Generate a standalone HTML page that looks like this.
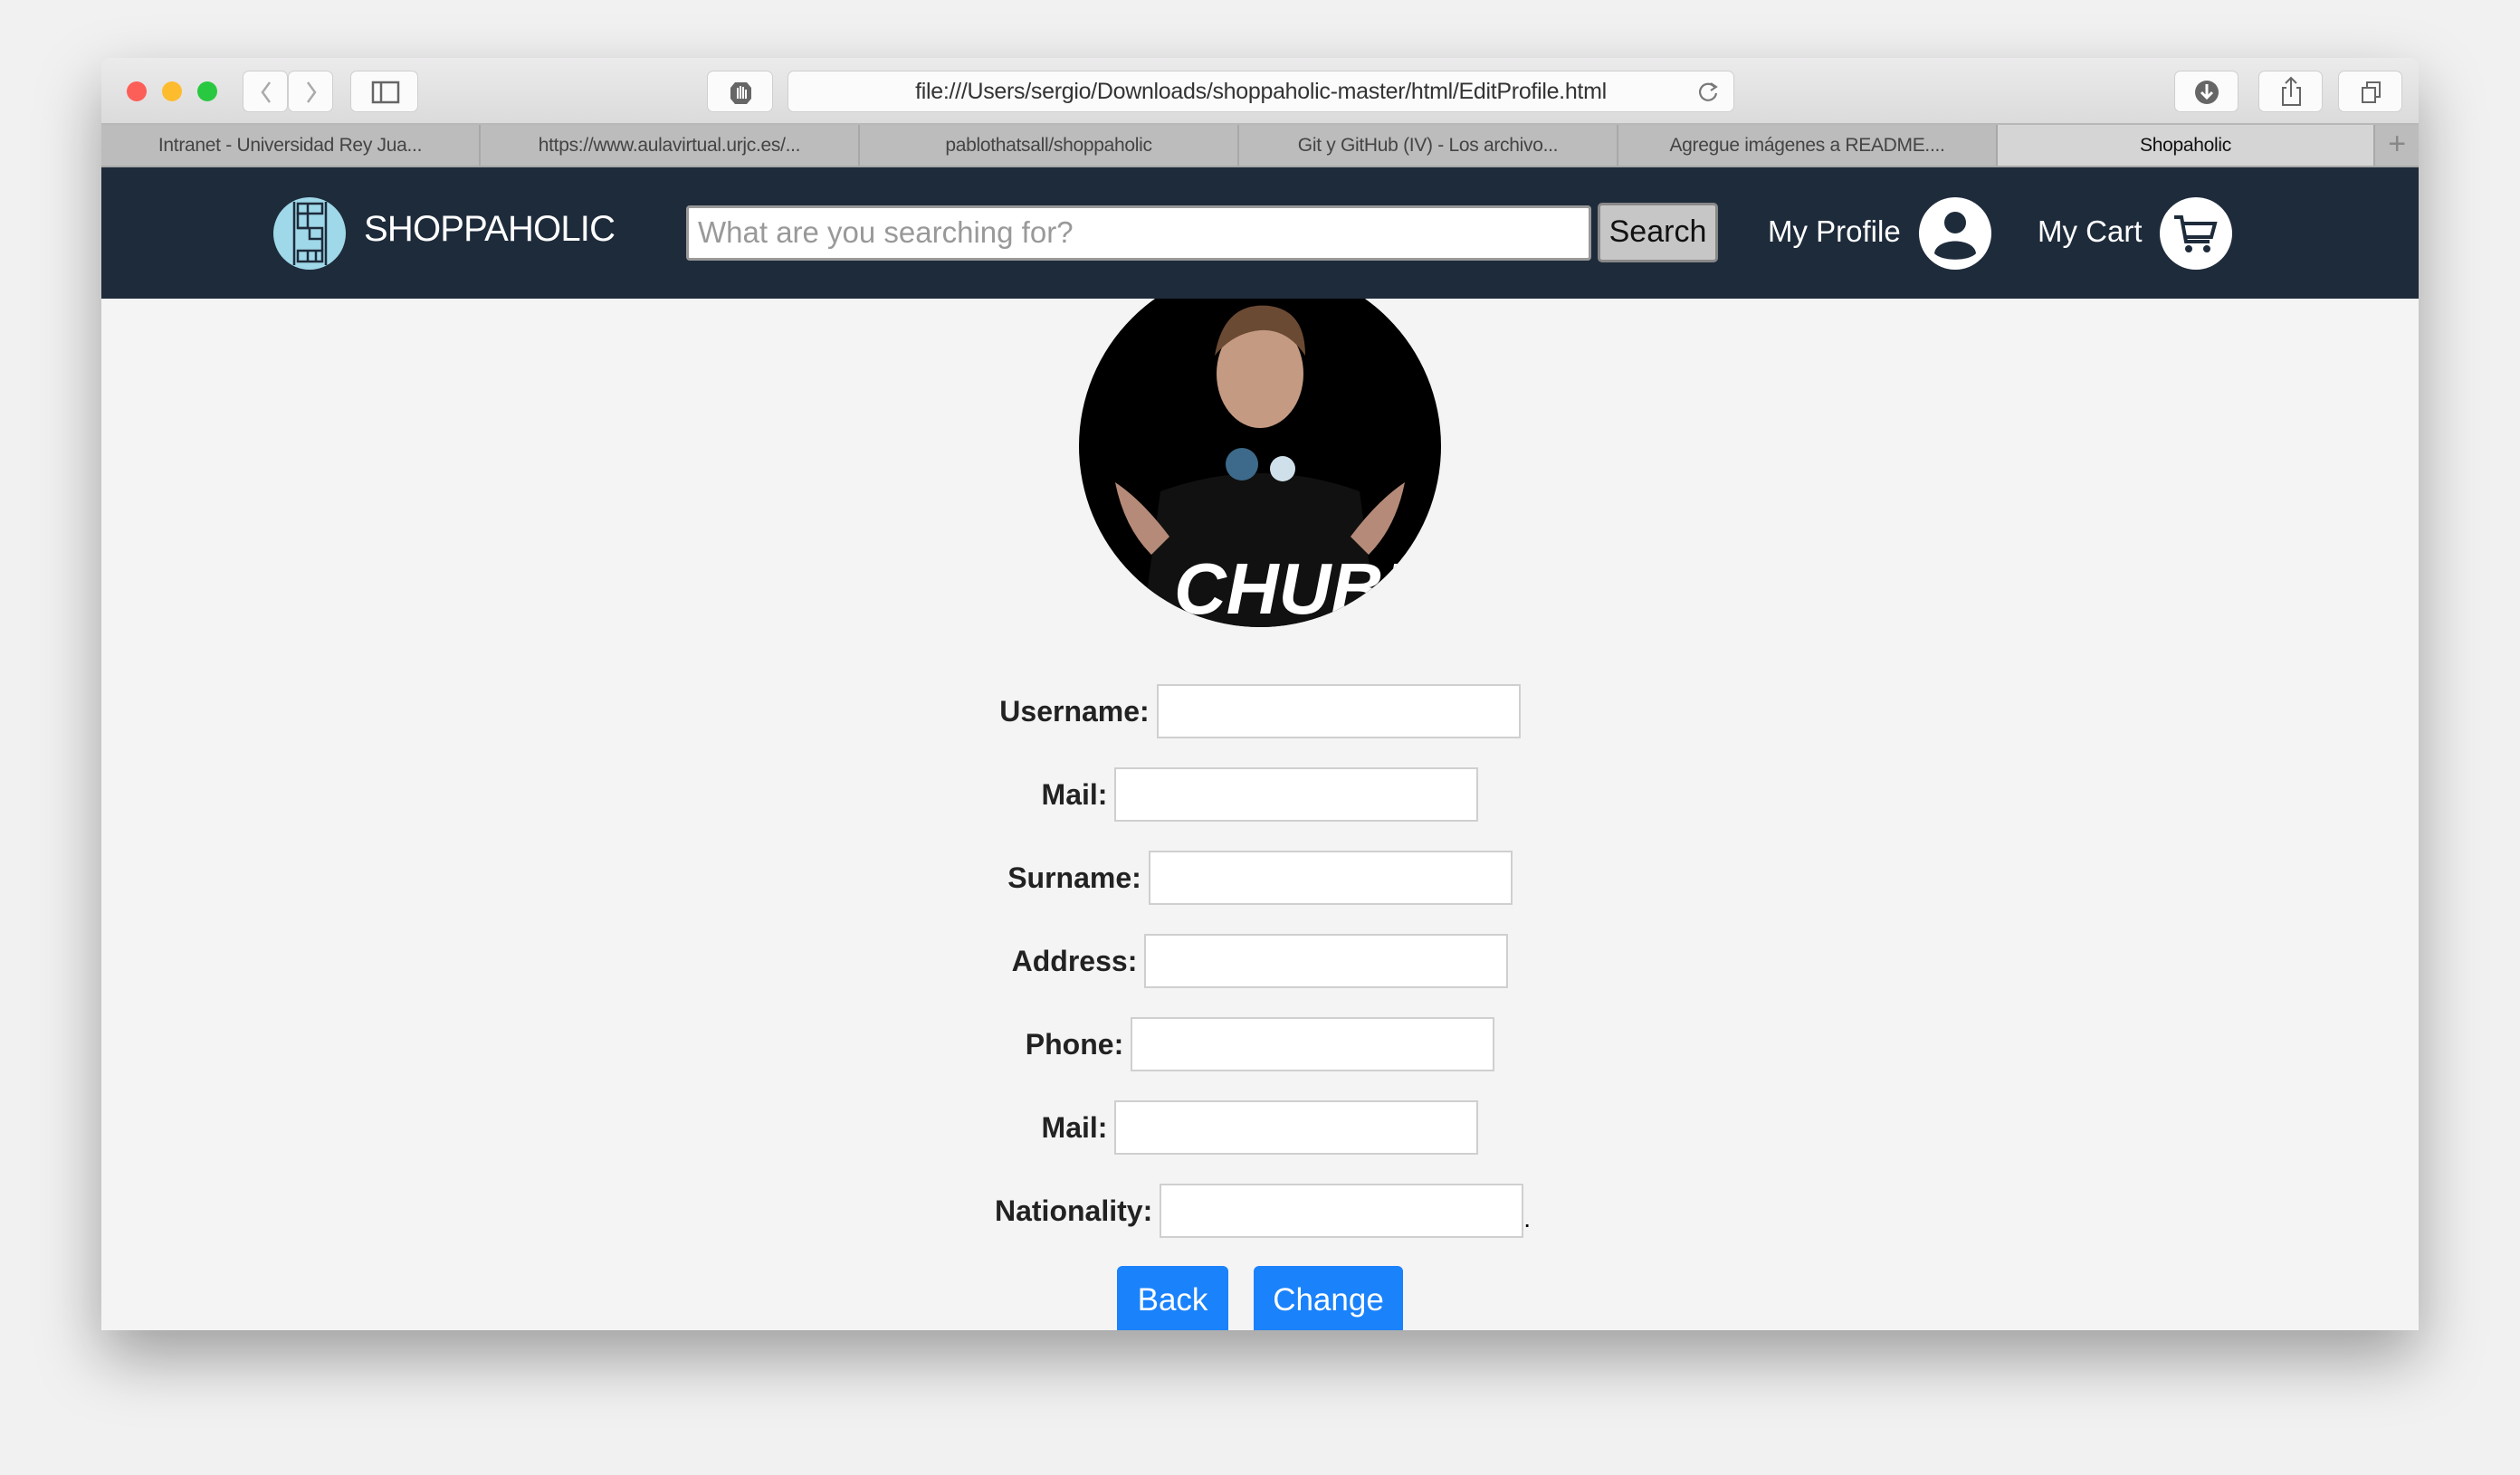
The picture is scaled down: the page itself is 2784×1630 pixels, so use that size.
<!DOCTYPE html>
<html><head><meta charset="utf-8"><style>
*{box-sizing:border-box;margin:0;padding:0}
body{width:2784px;height:1630px;background:#f1f1f1;position:relative;overflow:hidden;font-family:"Liberation Sans",sans-serif}
.win{position:absolute;left:112px;top:64px;width:2560px;height:1406px;background:#f4f4f4;border-radius:10px 10px 0 0;box-shadow:0 30px 70px rgba(0,0,0,.35);overflow:hidden}
.tb{position:absolute;left:0;top:0;width:2560px;height:74px;background:linear-gradient(#ecebec,#dcdbdc);border-bottom:2px solid #b9b8b9}
.dot{position:absolute;top:26px;width:22px;height:22px;border-radius:50%}
.btn{position:absolute;top:14px;height:46px;background:#fbfbfb;border:1px solid #cfcfcf;border-radius:7px}
.tabs{position:absolute;left:0;top:74px;width:2560px;height:47px;background:#bdbcbd;border-bottom:2px solid #a9a8a9}
.tab{position:absolute;top:0;height:45px;border-right:2px solid #a9a8a9;font-size:21px;color:#444;text-align:center;line-height:45px;letter-spacing:-0.3px}
.nav{position:absolute;left:0;top:121px;width:2560px;height:145px;background:#1e2b3b}
.row{position:absolute;left:0;width:2560px;display:flex;justify-content:center;align-items:center}
.row label{font-weight:bold;font-size:32px;color:#222;margin-right:8px}
.row .in{width:402px;height:60px;background:#fff;border:2px solid #cfcfcf}
.b{position:absolute;top:1335px;height:80px;background:#1a82fb;color:#fff;font-size:35px;border-radius:6px 6px 0 0;text-align:center;line-height:76px}
</style></head><body>
<div class="win">
 <div class="tb">
  <div class="dot" style="left:28px;background:#fc5f57"></div>
  <div class="dot" style="left:67px;background:#fdbc2e"></div>
  <div class="dot" style="left:106px;background:#29c841"></div>
  <div class="btn" style="left:156px;width:50px"><svg width="50" height="46"><path d="M29 12 L21 23 L29 34" stroke="#aaa" stroke-width="2.5" fill="none"/></svg></div>
  <div class="btn" style="left:206px;width:50px"><svg width="50" height="46"><path d="M21 12 L29 23 L21 34" stroke="#aaa" stroke-width="2.5" fill="none"/></svg></div>
  <div class="btn" style="left:275px;width:75px"><svg width="75" height="46"><rect x="24" y="12" width="28" height="22" stroke="#666" stroke-width="2.5" fill="none"/><line x1="33" y1="12" x2="33" y2="34" stroke="#666" stroke-width="2.5"/></svg></div>
  <div class="btn" style="left:669px;width:73px"><svg width="73" height="46"><path d="M30 12 L43 12 L48 18 L48 30 L43 36 L30 36 L25 30 L25 18Z" fill="#666"/><path d="M33 30 L33 18 M36 30 L36 16 M39 30 L39 17 M42 30 L42 20" stroke="#fff" stroke-width="2"/></svg></div>
  <div class="btn" style="left:758px;width:1046px;font-size:25px;color:#333;text-align:center;line-height:44px;letter-spacing:-0.3px">file:///Users/sergio/Downloads/shoppaholic-master/html/EditProfile.html<svg style="position:absolute;right:14px;top:10px" width="26" height="26"><path d="M19 7 A9 9 0 1 0 21 14" stroke="#777" stroke-width="2.2" fill="none"/><path d="M15 3 L21 7 L15 11" stroke="#777" stroke-width="2" fill="none"/></svg></div>
  <div class="btn" style="left:2290px;width:71px"><svg width="71" height="46"><circle cx="35" cy="23" r="13" fill="#666"/><path d="M35 14 L35 28 M29 23 L35 29 L41 23" stroke="#fff" stroke-width="3" fill="none"/></svg></div>
  <div class="btn" style="left:2383px;width:71px"><svg width="71" height="46"><path d="M30 18 L26 18 L26 37 L45 37 L45 18 L41 18 M35 28 L35 7 M29 13 L35 7 L41 13" stroke="#666" stroke-width="2" fill="none"/></svg></div>
  <div class="btn" style="left:2471px;width:71px"><svg width="71" height="46"><rect x="26" y="18" width="14" height="16" stroke="#666" stroke-width="2" fill="none"/><path d="M31 18 L31 12 L45 12 L45 28 L40 28" stroke="#666" stroke-width="2" fill="none"/></svg></div>
 </div>
 <div class="tabs">
  <div class="tab" style="left:0;width:419px">Intranet - Universidad Rey Jua...</div>
  <div class="tab" style="left:419px;width:419px">https://www.aulavirtual.urjc.es/...</div>
  <div class="tab" style="left:838px;width:419px">pablothatsall/shoppaholic</div>
  <div class="tab" style="left:1257px;width:419px">Git y GitHub (IV) - Los archivo...</div>
  <div class="tab" style="left:1676px;width:419px">Agregue imágenes a README....</div>
  <div class="tab" style="left:2095px;width:417px;background:#d6d5d6;color:#111">Shopaholic</div>
  <div class="tab" style="left:2512px;width:48px;border:none;font-size:34px;color:#888;line-height:42px">+</div>
 </div>
 <div class="nav">
  <svg style="position:absolute;left:189px;top:32px" width="82" height="82"><circle cx="41" cy="41" r="40" fill="#9fd8e8"/><g stroke="#1e2b3b" stroke-width="2.5" fill="none"><line x1="24" y1="6" x2="24" y2="76"/><line x1="59" y1="6" x2="59" y2="76"/><rect x="28" y="8" width="27" height="11"/><line x1="39" y1="8" x2="39" y2="19"/><rect x="28" y="19" width="11" height="16"/><path d="M28 35 L55 35 L55 60 M41 35 L41 47 L55 47"/><rect x="28" y="60" width="27" height="12"/><line x1="39" y1="60" x2="39" y2="72"/><line x1="48" y1="60" x2="48" y2="72"/></g></svg>
  <div style="position:absolute;left:290px;top:46px;font-size:40px;color:#fff;letter-spacing:-0.8px">SHOPPAHOLIC</div>
  <div style="position:absolute;left:646px;top:42px;width:1000px;height:61px;background:#fff;border:3px solid #999;border-radius:4px;font-size:33px;color:#999;padding:8px 10px">What are you searching for?</div>
  <div style="position:absolute;left:1653px;top:39px;width:133px;height:66px;background:#c6c6c6;border:3px solid #888;border-radius:5px;font-size:34px;color:#111;text-align:center;line-height:58px">Search</div>
  <div style="position:absolute;left:1841px;top:52px;font-size:33px;color:#fff">My Profile</div>
  <svg style="position:absolute;left:2007px;top:32px" width="82" height="82"><circle cx="41" cy="41" r="40" fill="#fff"/><circle cx="41" cy="29" r="12" fill="#1e2b3b"/><path d="M18 63 C20 45 62 45 64 63 C56 72 26 72 18 63Z" fill="#1e2b3b"/></svg>
  <div style="position:absolute;left:2139px;top:52px;font-size:33px;color:#fff">My Cart</div>
  <svg style="position:absolute;left:2273px;top:32px" width="82" height="82"><circle cx="41" cy="41" r="40" fill="#fff"/><path d="M17 23 L25 23 L30 50 L56 50 M28 30 L62 30 L58 45 L29 45" stroke="#1e2b3b" stroke-width="4" fill="none"/><circle cx="33" cy="58" r="4" fill="#1e2b3b"/><circle cx="53" cy="58" r="4" fill="#1e2b3b"/></svg>
 </div>
 <div style="position:absolute;left:1080px;top:266px;width:400px;height:367px;overflow:hidden">
  <svg width="400" height="400" style="position:absolute;top:-37px"><defs><clipPath id="c"><circle cx="200" cy="200" r="200"/></clipPath></defs><g clip-path="url(#c)"><rect width="400" height="400" fill="#000"/><path d="M70 400 L90 250 Q200 210 310 250 L330 400Z" fill="#111"/><ellipse cx="200" cy="120" rx="48" ry="60" fill="#c49a82"/><path d="M150 100 Q160 40 210 45 Q250 50 250 100 Q230 70 200 72 Q170 75 150 100Z" fill="#6b4a33"/><circle cx="180" cy="220" r="18" fill="#3d6a8a"/><circle cx="225" cy="225" r="14" fill="#cfe0ea"/><path d="M40 240 Q70 260 100 300 L80 320 Q50 290 40 240Z" fill="#b58a78"/><path d="M360 240 Q330 260 300 300 L320 320 Q350 290 360 240Z" fill="#b58a78"/><text x="105" y="385" font-family="Liberation Sans" font-weight="bold" font-style="italic" font-size="80" fill="#fff">CHUBI</text></g></svg>
 </div>
 <div class="row" style="top:692px"><label>Username:</label><div class="in"></div></div>
 <div class="row" style="top:784px"><label>Mail:</label><div class="in"></div></div>
 <div class="row" style="top:876px"><label>Surname:</label><div class="in"></div></div>
 <div class="row" style="top:968px"><label>Address:</label><div class="in"></div></div>
 <div class="row" style="top:1060px"><label>Phone:</label><div class="in"></div></div>
 <div class="row" style="top:1152px"><label>Mail:</label><div class="in"></div></div>
 <div class="row" style="top:1244px;padding-left:6px"><label>Nationality:</label><div class="in"></div><span style="font-size:28px;margin-top:18px">.</span></div>
 <div class="b" style="left:1122px;width:123px">Back</div>
 <div class="b" style="left:1273px;width:165px">Change</div>
</div>
</body></html>
